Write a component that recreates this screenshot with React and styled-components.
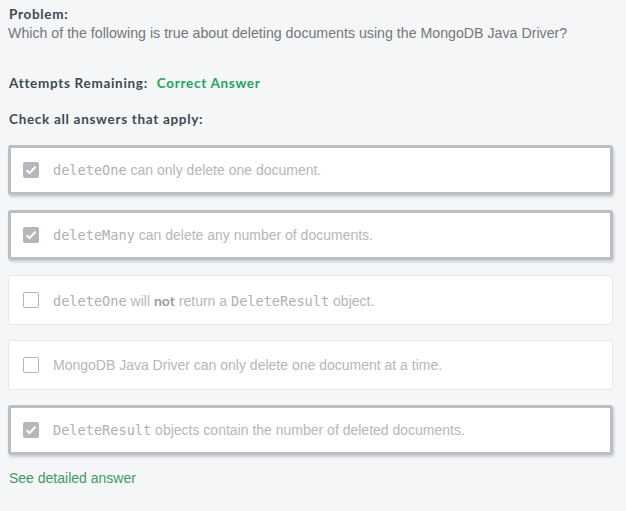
import React from "react";
import styled, { createGlobalStyle } from "styled-components";

const GlobalStyle = createGlobalStyle`
	html, body {
		margin: 0;
		padding: 0;
		background: #f5f6f7;
	}
	body {
		font-family: "Liberation Sans", Arial, sans-serif;
	}
`;

const options = [
	{ checked: true, parts: [["code", "deleteOne"], ["text", " can only delete one document."]] },
	{ checked: true, parts: [["code", "deleteMany"], ["text", " can delete any number of documents."]] },
	{
		checked: false,
		parts: [
			["code", "deleteOne"],
			["text", " will "],
			["bold", "not"],
			["text", " return a "],
			["code", "DeleteResult"],
			["text", " object."],
		],
	},
	{ checked: false, parts: [["text", "MongoDB Java Driver can only delete one document at a time."]] },
	{ checked: true, parts: [["code", "DeleteResult"], ["text", " objects contain the number of deleted documents."]] },
];

const CheckBox = ({ checked }) => (
	<Box $checked={checked}>
		{checked && (
			<svg width="12" height="10" viewBox="0 0 12 10">
				<path d="M1.5 5.2 L4.6 8 L10.5 1.8" fill="none" stroke="#fff" strokeWidth="2" />
			</svg>
		)}
	</Box>
);

const App = () => {
	return (
		<Page>
			<GlobalStyle />
			<Label>Problem:</Label>
			<Question>
				Which of the following is true about deleting documents using the MongoDB Java Driver?
			</Question>
			<Status>
				<Label>Attempts Remaining:</Label>
				<Correct>Correct Answer</Correct>
			</Status>
			<Instruction>Check all answers that apply:</Instruction>
			<List>
				{options.map((opt, i) => (
					<Option key={i} $checked={opt.checked}>
						<CheckBox checked={opt.checked} />
						<OptionText>
							{opt.parts.map(([kind, str], j) =>
								kind === "code" ? (
									<Code key={j}>{str}</Code>
								) : kind === "bold" ? (
									<b key={j}>{str}</b>
								) : (
									<span key={j}>{str}</span>
								)
							)}
						</OptionText>
					</Option>
				))}
			</List>
			<Detail>See detailed answer</Detail>
		</Page>
	);
};

const Page = styled.div`
	width: 626px;
	height: 511px;
	box-sizing: border-box;
	padding: 5px 13px 0 9px;
	display: flex;
	flex-direction: column;
`;

const Label = styled.div`
	font-family: Lato, "Liberation Sans", sans-serif;
	font-weight: 700;
	font-size: 13.5px;
	line-height: 18px;
	color: #3d4a52;
	letter-spacing: 0.7px;
`;

const Question = styled.div`
	font-family: "Liberation Sans", Arial, sans-serif;
	font-size: 14.2px;
	line-height: 20px;
	color: #74777a;
	margin-left: -1px;
`;

const Status = styled.div`
	display: flex;
	align-items: center;
	gap: 9px;
	margin-top: 31px;
`;

const Correct = styled(Label)`
	color: #21a55b;
`;

const Instruction = styled(Label)`
	margin-top: 18px;
`;

const List = styled.div`
	display: flex;
	flex-direction: column;
	gap: 15px;
	margin-top: 17px;
	margin-left: -1px;
`;

const Option = styled.div`
	box-sizing: border-box;
	height: 50px;
	display: flex;
	align-items: center;
	gap: 14px;
	background: #ffffff;
	border-radius: 3px;
	padding-left: ${(p) => (p.$checked ? "12px" : "14px")};
	border: ${(p) => (p.$checked ? "3px solid #b9bfc5" : "1px solid #e6e9eb")};
	box-shadow: ${(p) => (p.$checked ? "1px 2px 3px rgba(0, 0, 0, 0.18)" : "none")};
`;

const Box = styled.div`
	box-sizing: border-box;
	width: 16px;
	height: 16px;
	flex: none;
	border-radius: 2px;
	display: flex;
	align-items: center;
	justify-content: center;
	background: ${(p) => (p.$checked ? "#b3b8bd" : "#ffffff")};
	border: ${(p) => (p.$checked ? "none" : "1.5px solid #b3b6b9")};
`;

const OptionText = styled.div`
	font-family: "Liberation Sans", Arial, sans-serif;
	font-size: 14px;
	color: #b5b7b9;
	white-space: nowrap;

	b {
		color: #9a9c9e;
		font-family: Lato, "Liberation Sans", sans-serif;
	}
`;

const Code = styled.span`
	font-family: "DejaVu Sans Mono", "Liberation Mono", monospace;
	font-size: 13.6px;
	color: #aeb1b4;
`;

const Detail = styled.div`
	margin-top: 15px;
	font-family: "Liberation Sans", Arial, sans-serif;
	font-size: 14px;
	color: #3f9a63;
`;

export default App;
